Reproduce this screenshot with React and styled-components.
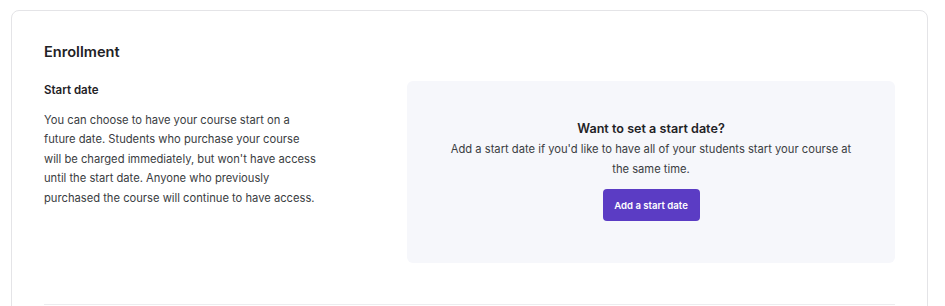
import styled, { createGlobalStyle } from "styled-components";

const GlobalStyle = createGlobalStyle`
  body {
    margin: 0;
    background: #fff;
    font-family: Inter, "Noto Sans", sans-serif;
    -webkit-font-smoothing: antialiased;
  }
`;

const Page = styled.div`
  padding: 10px 17px 0 11px;
  height: 306px;
  overflow: hidden;
  box-sizing: border-box;
`;

const Card = styled.section`
  border: 1px solid #e4e4e7;
  border-radius: 8px;
  padding: 31px 32px 0 32px;
  min-height: 320px;
  box-sizing: border-box;
`;

const Title = styled.h2`
  margin: 0 0 19px;
  font-size: 14.6px;
  line-height: 20px;
  font-weight: 600;
  color: #1f2226;
`;

const Row = styled.div`
  display: grid;
  grid-template-columns: 274px 1fr;
  column-gap: 89px;
  padding-bottom: 41px;
  border-bottom: 1px solid #ececef;
`;

const Label = styled.h3`
  margin: 0 0 12px;
  font-size: 11.5px;
  line-height: 18px;
  font-weight: 600;
  color: #1f2226;
`;

const Body = styled.p`
  margin: 0;
  font-size: 11.2px;
  line-height: 19.4px;
  color: #3a3d42;
`;

const Empty = styled.div`
  background: #f6f7fb;
  border-radius: 6px;
  padding: 38px 40px 42px;
  display: flex;
  flex-direction: column;
  align-items: center;
  text-align: center;
`;

const EmptyTitle = styled.h4`
  margin: 0 0 1px;
  font-size: 12.6px;
  line-height: 20px;
  font-weight: 600;
  color: #1f2226;
`;

const EmptyText = styled.p`
  margin: 0 0 10px;
  font-size: 11.2px;
  line-height: 19.5px;
  color: #3a3d42;
`;

const Button = styled.button`
  height: 32px;
  width: 97px;
  padding: 0;
  border: none;
  border-radius: 4px;
  background: #5b3cc4;
  color: #fff;
  font-family: inherit;
  font-size: 9.6px;
  font-weight: 600;
  cursor: pointer;
`;

export default function App() {
  return (
    <>
      <GlobalStyle />
      <Page>
        <Card>
          <Title>Enrollment</Title>
          <Row>
            <div>
              <Label>Start date</Label>
              <Body>
                You can choose to have your course start on a future date.
                Students who purchase your course will be charged immediately,
                but won't have access until the start date. Anyone who
                previously purchased the course will continue to have access.
              </Body>
            </div>
            <Empty>
              <EmptyTitle>Want to set a start date?</EmptyTitle>
              <EmptyText>
                Add a start date if you'd like to have all of your students
                start your course at the same time.
              </EmptyText>
              <Button>Add a start date</Button>
            </Empty>
          </Row>
        </Card>
      </Page>
    </>
  );
}
